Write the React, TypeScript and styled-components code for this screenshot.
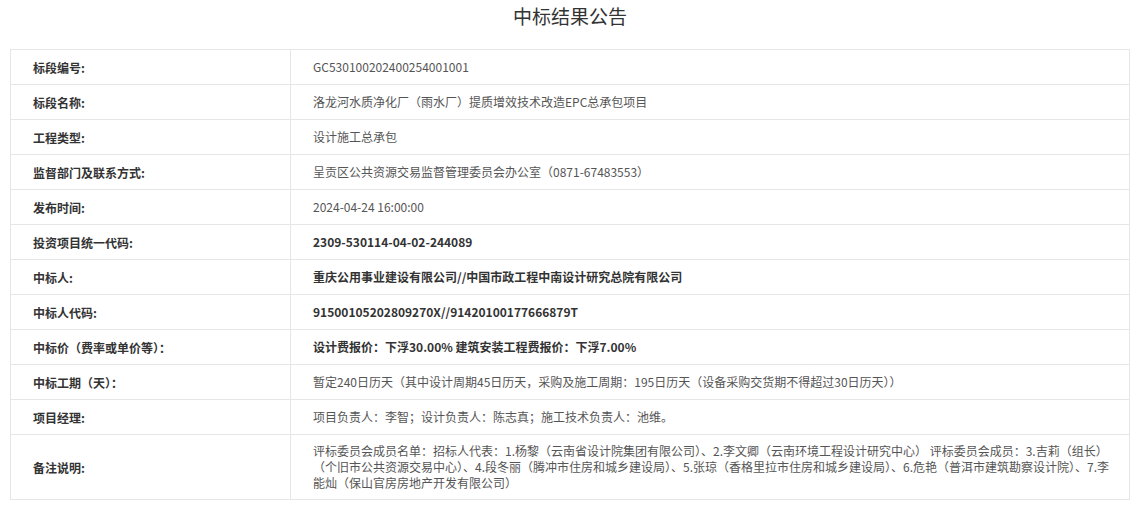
import React from 'react';
import styled, { createGlobalStyle } from 'styled-components';

const Global = createGlobalStyle`
  body {
    margin: 0;
    background: #fff;
    font-family: "Noto Sans CJK SC", "Noto Sans", sans-serif;
  }
`;

const Page = styled.div`
  padding: 0 14px 0 10px;
`;

const Title = styled.h1`
  margin: 0;
  height: 49px;
  line-height: 32px;
  text-align: center;
  font-size: 19px;
  font-weight: 400;
  color: #333;
`;

const Table = styled.table`
  width: 100%;
  border-collapse: collapse;
  table-layout: fixed;
  font-size: 12px;
`;

const Label = styled.td`
  width: 280px;
  box-sizing: border-box;
  border: 1px solid #e6e6e6;
  padding: 0 0 0 22px;
  height: 35px;
  font-weight: 700;
  color: #333;
`;

const Value = styled.td<{ $bold?: boolean }>`
  border: 1px solid #e6e6e6;
  padding: 8px 20px 8px 22px;
  line-height: 16px;
  color: ${p => (p.$bold ? '#333' : '#555')};
  font-weight: ${p => (p.$bold ? 700 : 400)};
`;

const rows: { label: string; value: string; bold?: boolean }[] = [
  { label: '标段编号:', value: 'GC5301002024002540010O1'.replace('O', '0') },
  { label: '标段名称:', value: '洛龙河水质净化厂（雨水厂）提质增效技术改造EPC总承包项目' },
  { label: '工程类型:', value: '设计施工总承包' },
  { label: '监督部门及联系方式:', value: '呈贡区公共资源交易监督管理委员会办公室（0871-67483553）' },
  { label: '发布时间:', value: '2024-04-24 16:00:00' },
  { label: '投资项目统一代码:', value: '2309-530114-04-02-244089', bold: true },
  { label: '中标人:', value: '重庆公用事业建设有限公司//中国市政工程中南设计研究总院有限公司', bold: true },
  { label: '中标人代码:', value: '91500105202809270X//91420100177666879T', bold: true },
  { label: '中标价（费率或单价等）：', value: '设计费报价：下浮30.00% 建筑安装工程费报价：下浮7.00%', bold: true },
  { label: '中标工期（天）：', value: '暂定240日历天（其中设计周期45日历天，采购及施工周期：195日历天（设备采购交货期不得超过30日历天））' },
  { label: '项目经理:', value: '项目负责人：李智；设计负责人：陈志真；施工技术负责人：池维。' },
  {
    label: '备注说明:',
    value:
      '评标委员会成员名单：招标人代表：1.杨黎（云南省设计院集团有限公司）、2.李文卿（云南环境工程设计研究中心） 评标委员会成员：3.吉莉（组长）（个旧市公共资源交易中心）、4.段冬丽（腾冲市住房和城乡建设局）、5.张琼（香格里拉市住房和城乡建设局）、6.危艳（普洱市建筑勘察设计院）、7.李能灿（保山官房房地产开发有限公司）',
  },
];

export default function App() {
  return (
    <Page>
      <Global />
      <Title>中标结果公告</Title>
      <Table>
        <tbody>
          {rows.map(r => (
            <tr key={r.label}>
              <Label>{r.label}</Label>
              <Value $bold={r.bold}>{r.value}</Value>
            </tr>
          ))}
        </tbody>
      </Table>
    </Page>
  );
}
